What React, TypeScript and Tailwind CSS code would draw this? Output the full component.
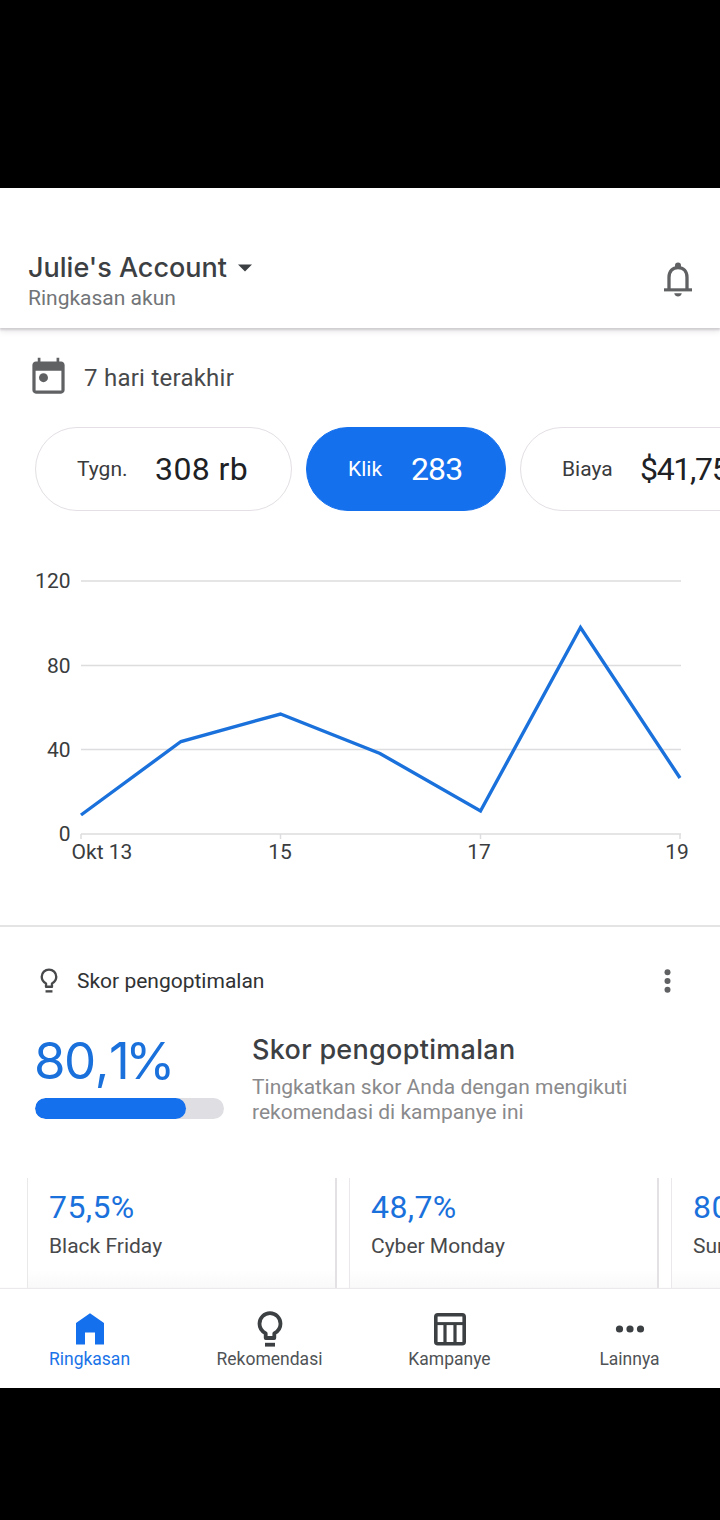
import type { ReactNode } from "react";

const METRICS = [
  { label: "Tygn.", value: "308 rb", active: false, box: "w-[257px] pl-[41px]", gap: "w-[78px]", tracking: "tracking-[0.4px]" },
  { label: "Klik", value: "283", active: true, box: "w-[200px] pl-[41px]", gap: "w-[63px]", tracking: "tracking-[-0.9px]" },
  { label: "Biaya", value: "$41,75", active: false, box: "w-[257px] pl-[41px]", gap: "w-[78px]", tracking: "tracking-[-1.3px]" },
];

const POINTS: [number, number][] = [
  [81, 304], [181, 230.5], [280.5, 203], [380, 242.5], [480.5, 300], [580.5, 116.5], [680, 267],
];

const GRID = [
  { label: "120", y: 70 },
  { label: "80", y: 154.5 },
  { label: "40", y: 238.5 },
  { label: "0", y: 323 },
];

const TICKS = [
  { label: "Okt 13", tick: 81, x: 102 },
  { label: "15", tick: 280.5, x: 280 },
  { label: "17", tick: 480.5, x: 479 },
  { label: "19", tick: 680, x: 677 },
];

const CAMPAIGNS = [
  { score: "75,5%", name: "Black Friday" },
  { score: "48,7%", name: "Cyber Monday" },
  { score: "80,2%", name: "Summer Sale" },
];

function Bell() {
  return (
    <svg width="30" height="36" viewBox="0 0 30 36" fill="none" className="shrink-0">
      <path d="M6 27.5V15.5C6 9.2 9.6 5.7 15 5.7S24 9.2 24 15.5V27.5" stroke="#5f6163" strokeWidth="3.3" />
      <path d="M12 6.5V3.6A3 3 0 0 1 18 3.6V6.5Z" fill="#5f6163" />
      <path d="M1 26.3H29V29.4H1Z" fill="#5f6163" />
      <path d="M11.2 31.2H18.8C18.2 33.6 16.8 34.5 15 34.5S11.8 33.6 11.2 31.2Z" fill="#5f6163" />
    </svg>
  );
}

function Calendar() {
  return (
    <svg width="43" height="43" viewBox="0 0 24 24" fill="#5f6163" className="shrink-0">
      <path d="M19 3h-1V1h-1.5v2H7.5V1H6v2H5c-1.11 0-2 .9-2 2v14c0 1.1.89 2 2 2h14c1.1 0 2-.9 2-2V5c0-1.1-.9-2-2-2zm.2 16.3H4.8V8.2h14.4z" />
      <circle cx="9.2" cy="12.1" r="2.5" />
    </svg>
  );
}

function Bulb({ width, height, stroke, color }: { width: number; height: number; stroke: number; color: string }) {
  return (
    <svg width={width} height={height} viewBox="0 0 26 36" fill="none" className="shrink-0">
      <path
        d="M8.7 27V22.4C4.9 20.3 2.5 17 2.5 12.7A10.5 10.5 0 0 1 23.5 12.7C23.5 17 21.1 20.3 17.3 22.4V27Z"
        stroke={color}
        strokeWidth={stroke}
        strokeLinejoin="round"
      />
      <path d="M8 33.7H18" stroke={color} strokeWidth={stroke} />
    </svg>
  );
}

function Home() {
  return (
    <svg width="28" height="36" viewBox="0 0 28 36" className="shrink-0">
      <path d="M14 2.2L28 12V33.5H19V21.5H9V33.5H0V12Z" fill="#1570ee" />
    </svg>
  );
}

function Table() {
  return (
    <svg width="32" height="36" viewBox="0 0 32 36" fill="none" stroke="#3c4043" className="shrink-0">
      <rect x="1.8" y="3.7" width="28.4" height="29" rx="2" strokeWidth="3.6" />
      <path d="M1.5 12.6H30.5" strokeWidth="3" />
      <path d="M11 12.6V32.5M21 12.6V32.5" strokeWidth="3.2" />
    </svg>
  );
}

function Dots() {
  return (
    <svg width="30" height="36" viewBox="0 0 30 36" fill="#3c4043" className="shrink-0">
      <circle cx="4.5" cy="18" r="3.6" />
      <circle cx="15" cy="18" r="3.6" />
      <circle cx="25.5" cy="18" r="3.6" />
    </svg>
  );
}

function NavItem({ icon, label, active = false }: { icon: ReactNode; label: string; active?: boolean }) {
  return (
    <button className="flex w-[180px] flex-col items-center pt-[22px]">
      {icon}
      <span className={`-ml-px h-6 text-[17.5px] leading-6 ${active ? "text-[#1a73e8]" : "text-[#505356]"}`}>{label}</span>
    </button>
  );
}

function Chart() {
  return (
    <svg width="720" height="414" viewBox="0 0 720 414" className="block shrink-0 font-[Roboto,sans-serif] text-[21px]">
      {GRID.map((g) => (
        <g key={g.label}>
          <path d={`M81 ${g.y}H681`} stroke="#dddcde" strokeWidth="1.6" />
          <text x="70.5" y={g.y + 7.3} textAnchor="end" fill="#3a3c3e">{g.label}</text>
        </g>
      ))}
      {TICKS.map((t) => (
        <g key={t.label}>
          <path d={`M${t.tick} 323V328`} stroke="#dddcde" strokeWidth="1.5" />
          <text x={t.x} y="348" textAnchor="middle" fill="#3a3c3e">{t.label}</text>
        </g>
      ))}
      <polyline points={POINTS.map((p) => p.join(",")).join(" ")} fill="none" stroke="#1a71dc" strokeWidth="3.4" strokeLinejoin="miter" />
    </svg>
  );
}

export default function App() {
  return (
    <div className="flex h-[1520px] w-[720px] flex-col overflow-hidden bg-black font-[Roboto,sans-serif]">
      <div className="h-[188px] shrink-0" />
      <div className="flex h-[1200px] shrink-0 flex-col overflow-hidden bg-white">
        <header className="z-10 flex h-[140px] shrink-0 justify-between bg-white pl-[28px] pr-[27px] shadow-[0_2px_2px_#cfcdcf,0_3px_7px_#e8e5e8]">
          <div className="pt-[64px]">
            <div className="flex h-8 items-center">
              <h1 className="font-[Inter,sans-serif] text-[27px] font-medium leading-8 text-[#3c4043]">Julie's Account</h1>
              <svg width="14" height="8" viewBox="0 0 14 8" className="ml-[11px]">
                <path d="M0 0.500H14L7 7.500Z" fill="#3c4043" />
              </svg>
            </div>
            <p className="text-[21px] leading-7 text-[#727578]">Ringkasan akun</p>
          </div>
          <div className="pt-[74px]"><Bell /></div>
        </header>

        <div className="flex h-[99px] shrink-0 items-center gap-[14px] pl-[27px]">
          <Calendar />
          <span className="text-[24px] leading-8 tracking-[0.25px] text-[#48494b]">7 hari terakhir</span>
        </div>

        <div className="flex h-[84px] shrink-0 gap-[14px] overflow-hidden pl-[35px]">
          {METRICS.map((m) => (
            <div
              key={m.label}
              className={`flex shrink-0 items-center rounded-full border-[1.5px] ${m.box} ${
                m.active ? "border-[#1570ee] bg-[#1570ee] text-white" : "border-[#e3dfe4] bg-white text-[#202124]"
              }`}
            >
              <span className={`shrink-0 text-[21px] leading-8 ${m.gap} ${m.active ? "" : "text-[#3a3b3d]"}`}>{m.label}</span>
              <span className={`whitespace-nowrap text-[32px] leading-10 ${m.tracking}`}>{m.value}</span>
            </div>
          ))}
        </div>

        <Chart />

        <section className="flex h-[364px] shrink-0 flex-col overflow-hidden border-t-2 border-[#e4e4e5]">
          <div className="flex h-[106px] shrink-0 items-center pl-[40px] pr-[48px] pt-px">
            <Bulb width={18} height={25} stroke={3.4} color="#48494b" />
            <h2 className="ml-[19px] flex-1 text-[21px] leading-7 text-[#303234]">Skor pengoptimalan</h2>
            <svg width="9" height="26" viewBox="0 0 9 26" fill="#5f6163">
              <circle cx="4.5" cy="4.3" r="3" />
              <circle cx="4.5" cy="13" r="3" />
              <circle cx="4.5" cy="21.7" r="3" />
            </svg>
          </div>
          <div className="flex h-[142px] shrink-0 pl-[35px]">
            <div className="w-[217px] shrink-0">
              <div className="-ml-px h-[56px] font-[Inter,sans-serif] text-[51px] leading-[56px] tracking-[-1.5px] text-[#1a71dc]">
                80<span className="tracking-[-0.5px]">,</span><span className="tracking-[-4.5px]">1</span>%
              </div>
              <div className="mt-[9px] h-[21px] w-[189px] overflow-hidden rounded-full bg-[#dfdfe3]">
                <div className="h-full w-[151px] rounded-full bg-[#1570ee]" />
              </div>
            </div>
            <div>
              <h3 className="h-8 pt-px font-[Inter,sans-serif] text-[27px] font-medium leading-8 tracking-[0.3px] text-[#3c4043]">Skor pengoptimalan</h3>
              <p className="mt-[9.5px] w-[400px] text-[21px] leading-[25.3px] text-[#8a8a8c]">
                Tingkatkan skor Anda dengan mengikuti rekomendasi di kampanye ini
              </p>
            </div>
          </div>
          <div className="flex h-[114px] shrink-0 gap-[12px] overflow-hidden pl-[27px] pt-[3px]">
            {CAMPAIGNS.map((c) => (
              <article
                key={c.name}
                className="h-[140px] w-[310px] shrink-0 border-l border-r-2 border-l-[#ebe8ec] border-r-[#e4e1e5] bg-gradient-to-b from-white from-65% to-[#f8f6f8] to-85% pl-[21px] pt-[9px]"
              >
                <div className="h-10 text-[32px] leading-10 tracking-[0.4px] text-[#1a71dc]">{c.score}</div>
                <div className="mt-[5px] h-7 text-[21px] leading-7 text-[#48494b]">{c.name}</div>
              </article>
            ))}
          </div>
        </section>

        <nav className="z-10 flex h-[99px] shrink-0 bg-white shadow-[0_-1px_1px_#ebe9ec]">
          <NavItem icon={<Home />} label="Ringkasan" active />
          <NavItem icon={<Bulb width={26} height={36} stroke={3.8} color="#3c4043" />} label="Rekomendasi" />
          <NavItem icon={<Table />} label="Kampanye" />
          <NavItem icon={<Dots />} label="Lainnya" />
        </nav>
      </div>
      <div className="h-[132px] shrink-0" />
    </div>
  );
}
